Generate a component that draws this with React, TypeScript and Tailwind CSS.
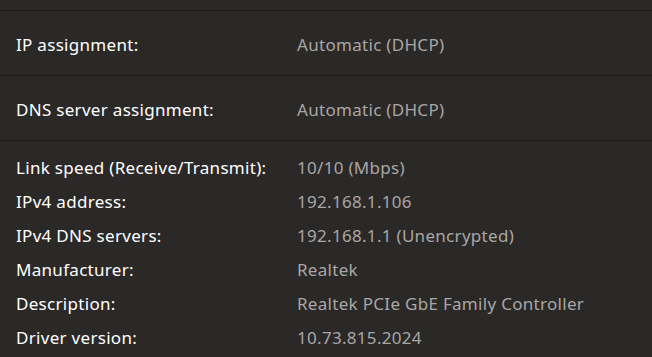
const TOP_ROWS = [
  { label: "IP assignment:", value: "Automatic (DHCP)" },
  { label: "DNS server assignment:", value: "Automatic (DHCP)" },
];

const DETAILS = [
  { label: "Link speed (Receive/Transmit):", value: "10/10 (Mbps)" },
  { label: "IPv4 address:", value: "192.168.1.106" },
  { label: "IPv4 DNS servers:", value: "192.168.1.1 (Unencrypted)" },
  { label: "Manufacturer:", value: "Realtek" },
  { label: "Description:", value: "Realtek PCIe GbE Family Controller" },
  { label: "Driver version:", value: "10.73.815.2024" },
];

export default function App() {
  return (
    <div
      className="w-[652px] h-[357px] overflow-hidden bg-[#2b2928] text-[17px] tracking-[0.3px]"
      style={{ fontFamily: '"Noto Sans", "Open Sans", sans-serif' }}
    >
      {/* tail of the previous row */}
      <div className="h-[11px] border-b border-[#1d1b1a]" />

      {TOP_ROWS.map((row) => (
        <div
          key={row.label}
          className="h-[65px] flex items-center border-b border-[#1d1b1a] px-4 pt-[3px]"
        >
          <span className="w-[281px] text-white">{row.label}</span>
          <span className="text-[#a9a6a4]">{row.value}</span>
        </div>
      ))}

      {/* adapter details */}
      <div className="flex flex-col pt-[10px]">
        {DETAILS.map((row) => (
          <div key={row.label} className="h-[34px] flex items-center px-4">
            <span className="w-[281px] text-white">{row.label}</span>
            <span className="text-[#a9a6a4]">{row.value}</span>
          </div>
        ))}
      </div>
    </div>
  );
}
